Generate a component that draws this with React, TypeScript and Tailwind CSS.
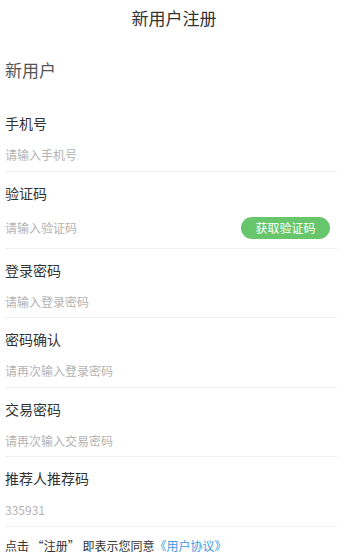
import React from "react"

const FIELDS = [
  { label: "手机号", placeholder: "请输入手机号" },
  { label: "验证码", placeholder: "请输入验证码", code: true },
  { label: "登录密码", placeholder: "请输入登录密码" },
  { label: "密码确认", placeholder: "请再次输入登录密码" },
  { label: "交易密码", placeholder: "请再次输入交易密码" },
  { label: "推荐人推荐码", placeholder: "335931" },
]

const font = { fontFamily: '"Noto Sans CJK SC", "Noto Sans", sans-serif' }

export default function App() {
  return (
    <div className="min-h-screen bg-white text-[#333]" style={font}>
      <div className="h-[35px] flex items-center justify-center text-[17px] text-[#333]">新用户注册</div>

      <div className="pl-[5px] pr-[11px]">
        <div className="h-[67px] pt-[3px] flex items-center text-[17px] text-[#555]">新用户</div>

        {FIELDS.map(f => (
          <div key={f.label} className="border-b border-[#efefef]">
            <div className="pt-[14px] text-[14px] leading-[14px] text-[#333]">{f.label}</div>
            {f.code ? (
              <div className="mt-[17px] pb-[9px] flex items-center justify-between">
                <input
                  className="block flex-1 min-w-0 h-[22px] text-[12px] outline-none placeholder:text-[#b3b3b3]"
                  placeholder={f.placeholder}
                  style={font}
                />
                <button className="mr-[7px] w-[89px] h-[22px] rounded-full bg-[#67c66c] text-white text-[12px] leading-[22px]">
                  获取验证码
                </button>
              </div>
            ) : (
              <div className="mt-[16px] pb-[6.6px]">
                <input
                  className="block w-full h-[18px] text-[12px] outline-none placeholder:text-[#b3b3b3]"
                  placeholder={f.placeholder}
                  style={font}
                />
              </div>
            )}
          </div>
        ))}

        <div className="pt-[12px] text-[12px] leading-[14px] text-[#333] whitespace-pre">
          {"点击 “注册” 即表示您同意"}<span className="text-[#3a9ae0]">《用户协议》</span>
        </div>
      </div>
    </div>
  )
}
